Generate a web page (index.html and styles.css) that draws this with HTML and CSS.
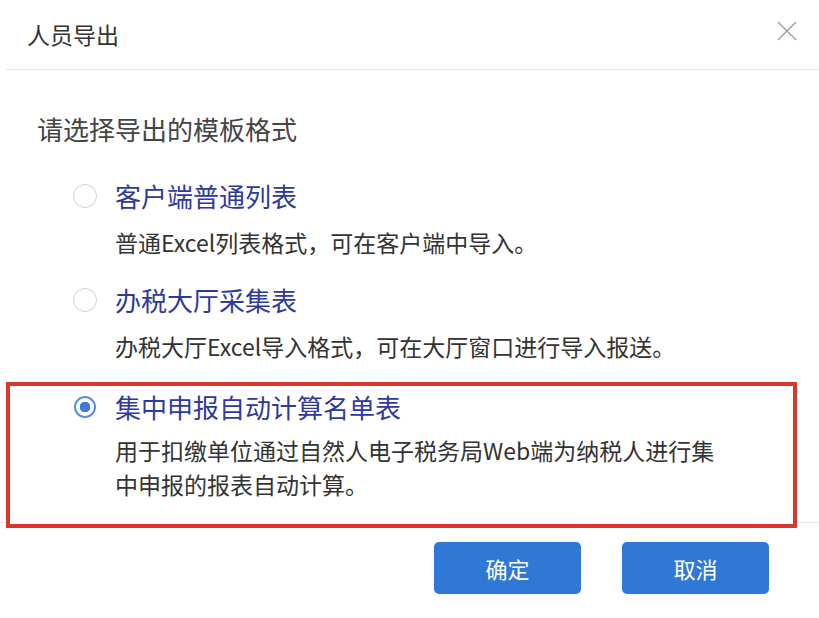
FILE: index.html
```html
<!DOCTYPE html>
<html lang="zh-CN">

<head>
    <meta charset="UTF-8">
    <meta name="viewport" content="width=device-width, initial-scale=1.0">
    <title>人员导出</title>
    <link rel="stylesheet" href="styles.css">
</head>

<body>
    <div class="dialog">
        <div class="dialog-header">
            <span class="dialog-title">人员导出</span>
            <button class="close-btn" title="关闭">
                <svg width="20" height="20" viewBox="0 0 20 20">
                    <path d="M1 1 L19 19 M19 1 L1 19" stroke="#9a9a9a" stroke-width="1.3" fill="none" />
                </svg>
            </button>
        </div>

        <div class="dialog-body">
            <p class="prompt">请选择导出的模板格式</p>

            <div class="options">
                <label class="option">
                    <span class="radio"></span>
                    <span class="option-text">
                        <span class="option-label">客户端普通列表</span>
                        <span class="option-desc">普通Excel列表格式，可在客户端中导入。</span>
                    </span>
                </label>

                <label class="option">
                    <span class="radio"></span>
                    <span class="option-text">
                        <span class="option-label">办税大厅采集表</span>
                        <span class="option-desc">办税大厅Excel导入格式，可在大厅窗口进行导入报送。</span>
                    </span>
                </label>

                <label class="option option-marked">
                    <span class="radio checked"></span>
                    <span class="option-text">
                        <span class="option-label">集中申报自动计算名单表</span>
                        <span class="option-desc">用于扣缴单位通过自然人电子税务局Web端为纳税人进行集中申报的报表自动计算。</span>
                    </span>
                </label>
            </div>
        </div>

        <div class="dialog-footer">
            <button class="btn">确定</button>
            <button class="btn">取消</button>
        </div>
    </div>
</body>

</html>
```

FILE: styles.css
```css
body {
    margin: 0;
    padding: 0;
    background-color: #fff;
    font-family: "Microsoft YaHei", "Noto Sans CJK SC", "Noto Sans", sans-serif;
    color: #333;
}

.dialog {
    width: 819px;
    height: 618px;
    background-color: #fff;
}

/* 标题栏 */
.dialog-header {
    height: 69px;
    margin-left: 6px;
    padding: 0 22px 0 21px;
    display: flex;
    align-items: center;
    justify-content: space-between;
    border-bottom: 1px solid #e6e6e6;
}

.dialog-title {
    font-size: 23px;
    color: #333;
    margin-top: -2px;
}

.close-btn {
    border: none;
    background: none;
    padding: 0;
    width: 20px;
    height: 20px;
    margin-top: -8px;
    cursor: pointer;
}

.close-btn svg {
    display: block;
}

/* 内容 */
.dialog-body {
    padding-top: 41px;
}

.prompt {
    margin: 0 0 27px 37px;
    font-size: 26px;
    line-height: 36px;
    color: #444;
}

.options {
    display: flex;
    flex-direction: column;
    gap: 15px;
    margin: 0 22px 0 6px;
}

.option {
    display: flex;
    gap: 18px;
    padding-left: 63px;
    border: 4px solid transparent;
    cursor: pointer;
}

.option-marked {
    position: relative;
    z-index: 1;
    border-color: #d9392b;
    padding-top: 3px;
    padding-bottom: 23px;
    background-color: #fff;
}

.radio {
    flex: none;
    width: 24px;
    height: 24px;
    margin-top: 6px;
    box-sizing: border-box;
    border: 1.5px solid #d2d2d2;
    border-radius: 50%;
    background-color: #fff;
}

.radio.checked {
    width: 22px;
    height: 22px;
    margin: 7px 1px 0;
    border: 2px solid #5a8fd8;
    background: radial-gradient(circle, #3f7bd6 0 5px, #fff 5.5px);
}

.option-text {
    display: flex;
    flex-direction: column;
}

.option-label {
    font-size: 26px;
    line-height: 36px;
    color: #2d3a9c;
}

.option-desc {
    margin-top: 11px;
    font-size: 23px;
    line-height: 34px;
    color: #333;
}

.option-marked .option-desc {
    margin-top: 8px;
    max-width: 612px;
}

/* 底部按钮 */
.dialog-footer {
    margin-top: -6px;
    border-top: 1px solid #e6e6e6;
    padding: 19px 50px 0 0;
    display: flex;
    justify-content: flex-end;
    gap: 41px;
}

.btn {
    width: 147px;
    height: 52px;
    border: none;
    border-radius: 5px;
    background-color: #2f78d6;
    color: #fff;
    font-family: inherit;
    font-size: 22px;
    cursor: pointer;
}

.btn:hover {
    background-color: #2a6cc2;
}
```
